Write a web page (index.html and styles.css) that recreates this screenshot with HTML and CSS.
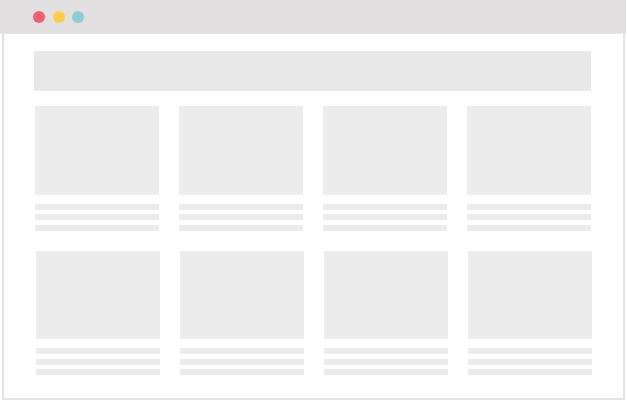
FILE: index.html
```html
<!DOCTYPE html>
<html>
<head>
<meta charset="utf-8">
<link rel="stylesheet" href="styles.css">
</head>
<body>
<div class="window">
  <div class="bar">
    <span class="dot red"></span>
    <span class="dot yellow"></span>
    <span class="dot teal"></span>
  </div>
  <div class="frame">
    <div class="banner"></div>
    <div class="row">
      <div class="item"><div class="thumb"></div><div class="line"></div><div class="line"></div><div class="line"></div></div>
      <div class="item"><div class="thumb"></div><div class="line"></div><div class="line"></div><div class="line"></div></div>
      <div class="item"><div class="thumb"></div><div class="line"></div><div class="line"></div><div class="line"></div></div>
      <div class="item"><div class="thumb"></div><div class="line"></div><div class="line"></div><div class="line"></div></div>
    </div>
    <div class="row second">
      <div class="item"><div class="thumb"></div><div class="line"></div><div class="line"></div><div class="line"></div></div>
      <div class="item"><div class="thumb"></div><div class="line"></div><div class="line"></div><div class="line"></div></div>
      <div class="item"><div class="thumb"></div><div class="line"></div><div class="line"></div><div class="line"></div></div>
      <div class="item"><div class="thumb"></div><div class="line"></div><div class="line"></div><div class="line"></div></div>
    </div>
  </div>
</div>
</body>
</html>
```
FILE: styles.css
```css
html, body {
  margin: 0;
  padding: 0;
  background: #ffffff;
  width: 627px;
  height: 400px;
  overflow: hidden;
}

.window {
  width: 627px;
  height: 400px;
  display: flex;
  flex-direction: column;
}

.bar {
  width: 626px;
  height: 33px;
  background: #e1dfe0;
  border-bottom: 1px solid #e9e7e8;
  display: flex;
  align-items: center;
  gap: 7.5px;
  padding-left: 33px;
  box-sizing: border-box;
  height: 34px;
}

.dot {
  width: 12px;
  height: 12px;
  border-radius: 50%;
  display: block;
}
.red { background: #ef5f72; }
.yellow { background: #fecd4c; }
.teal { background: #8ecdd0; }

.frame {
  margin-left: 2px;
  width: 623px;
  height: 366px;
  box-sizing: border-box;
  border: 2px solid #e3e3e3;
  border-top: none;
  padding-top: 17px;
  padding-left: 30px;
}

.banner {
  width: 557px;
  height: 40px;
  background: #e8e8e8;
  margin-left: 0;
  margin-bottom: 15px;
}

.row {
  display: flex;
  gap: 20px;
  padding-left: 1px;
}

.row.second {
  padding-left: 2.3px;
  margin-top: 20px;
}

.item {
  width: 124px;
  display: flex;
  flex-direction: column;
}

.thumb {
  height: 88.5px;
  background: #ececec;
  margin-bottom: 9px;
}

.line {
  height: 6px;
  background: #ebebeb;
  margin-bottom: 4.6px;
}

.line:last-child {
  margin-bottom: 0;
}
```
